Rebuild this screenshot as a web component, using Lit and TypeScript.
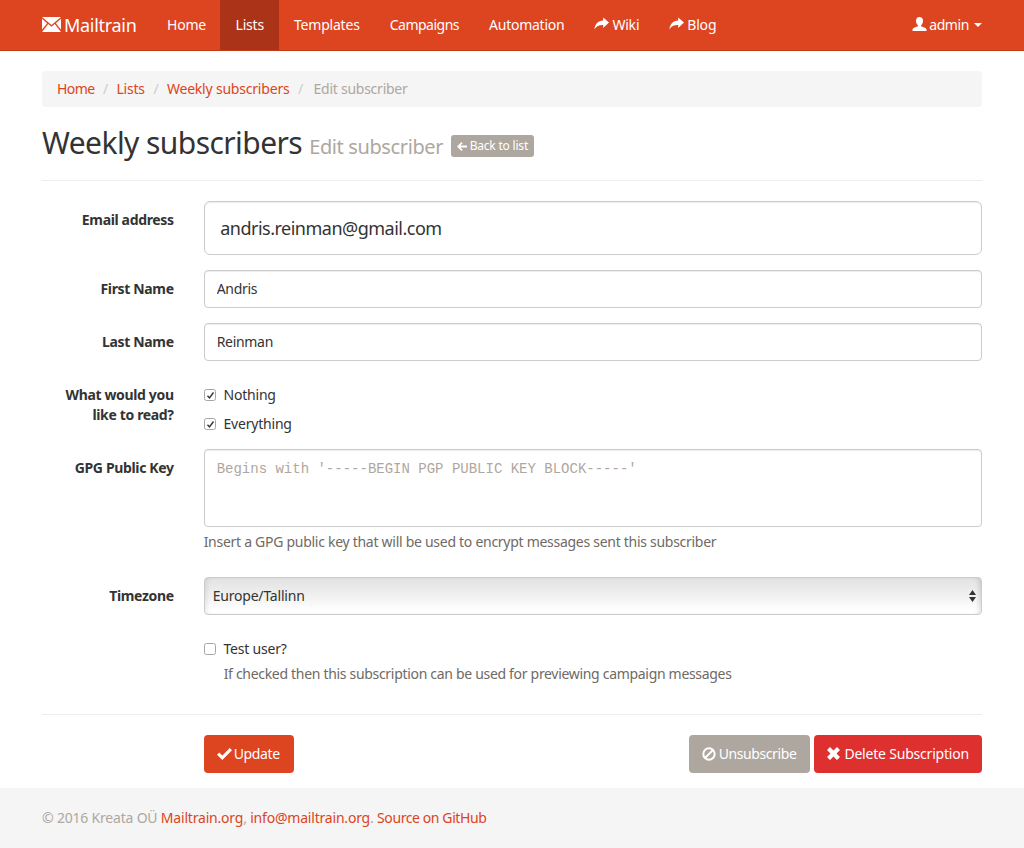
import { LitElement, html, css, svg } from "lit";
import { customElement } from "lit/decorators.js";

const shareIcon = svg`<path d="M15 5.6 9.200.4v3.100C4 3.700 1 7 .4 12.500c1.800-3.200 4.600-4.500 8.800-4.400v2.900z" fill="currentColor"/>`;
const tick = svg`<path d="M1.500 4.800 3.500 7 7.500 1.500" fill="none" stroke="currentColor" stroke-width="1.400"/>`;

@customElement("app-root")
export class AppRoot extends LitElement {
  static styles = css`
    :host { display: block; font-family: "Noto Sans", "Open Sans", sans-serif; font-size: 14px; line-height: 20px; color: #333; letter-spacing: -0.2px; }
    * { box-sizing: border-box; }
    a { color: #dd4420; text-decoration: none; }
    .navbar { height: 51px; background: #dd4420; border-bottom: 1px solid #c23a18; display: flex; padding: 0 42px; color: #fff; }
    .brand { display: flex; align-items: center; gap: 3px; font-size: 18px; color: #fff; padding-right: 15px; width: 110px; flex: none; letter-spacing: -0.3px; }
    .brand svg { width: 19px; height: 15px; margin-top: -1px; flex: none; }
    .nav { display: flex; flex: 1; }
    .nav a { display: flex; align-items: center; gap: 3px; color: #fff; padding: 0 15px; height: 50px; }
    .nav a.active { background: #ab3418; margin-left: -1px; padding: 0 15px 0 15.500px; }
    .nav a.tight { letter-spacing: -0.5px; }
    .nav a.semi { letter-spacing: -0.25px; }
    .nav .spacer { flex: 1; }
    .nav a.user { padding: 0; gap: 2px; letter-spacing: -0.4px; }
    .nav svg { flex: none; margin-bottom: 3px; }
    .caret { width: 0; height: 0; border-left: 4px solid transparent; border-right: 4px solid transparent; border-top: 4px solid #fff; margin-left: 3px; }
    main { padding: 20px 42px 0; }
    .crumbs { display: flex; align-items: center; height: 36px; background: #f5f5f5; border-radius: 4px; padding: 0 15px; color: #aea79f; }
    .crumbs a:first-child { letter-spacing: -0.6px; }
    .crumbs i { font-style: normal; color: #ccc; padding: 0 8.500px; }
    .crumbs span { margin-left: 2px; letter-spacing: -0.25px; }
    h2 { margin: 16px 0 0; height: 57px; font-weight: 400; font-size: 30px; line-height: 40px; color: #333; display: flex; align-items: baseline; letter-spacing: -0.57px; }
    h2 small { font-size: 20px; color: #aea79f; margin-left: 7px; letter-spacing: -0.38px; }
    .back { display: inline-flex; align-items: center; gap: 3px; height: 22px; margin-left: 7.500px; padding: 0 6px; background: #aea79f; color: #fff; border-radius: 3px; font-size: 12px; line-height: 18px; letter-spacing: -0.2px; align-self: center; margin-top: -11px; }
    hr { border: 0; border-top: 1px solid #eee; margin: 0; }
    .head-rule { margin-bottom: 20px; }
    .row { display: grid; grid-template-columns: 131.67px 1fr; column-gap: 30px; margin-bottom: 15px; }
    .label { text-align: right; font-weight: 700; padding-top: 9px; letter-spacing: -0.35px; }
    .field { min-width: 0; }
    input.text, textarea, select { display: block; width: 100%; font: inherit; letter-spacing: inherit; color: #333; background: #fff; border: 1px solid #ccc; border-radius: 4px; box-shadow: inset 0 1px 1px rgba(0,0,0,.075); outline: none; }
    input.text { height: 38px; padding: 7px 12px 9px; letter-spacing: -0.3px; }
    input.lg { height: 54px; padding: 14px 15.500px; font-size: 18px; border-radius: 6px; line-height: 24px; letter-spacing: -0.5px; }
    textarea { height: 78px; padding: 9px 12px; font-family: "Liberation Mono", monospace; font-size: 14px; line-height: 20px; resize: none; display: block; letter-spacing: 0; }
    textarea::placeholder { color: #aea79f; opacity: 1; }
    .help { margin-top: 5px; color: #6f6a64; letter-spacing: -0.28px; }
    .help.spaced { margin-bottom: 10px; }
    .checks { padding-top: 9px; }
    .check { display: flex; align-items: center; height: 20px; gap: 7.300px; }
    .check + .check { margin-top: 9px; }
    .box { width: 12px; height: 12px; margin-left: 0.500px; border: 1px solid #a6a6a6; border-radius: 2.500px; background: #fff; flex: none; display: flex; align-items: center; justify-content: center; color: #333; }
    .selwrap { position: relative; }
    select { appearance: none; height: 38px; padding: 0 8px; background: linear-gradient(#e2e2e2, #f2f2f2 55%, #fff 90%); box-shadow: inset 4px 0 4px -2px rgba(0,0,0,.08), inset -4px 0 4px -2px rgba(0,0,0,.12); }
    .arrows { position: absolute; right: 6px; top: 12px; width: 7px; height: 14px; pointer-events: none; }
    .test { margin-top: 24px; }
    .test .help { margin: 5px 0 0 20px; letter-spacing: -0.31px; }
    .rule2 { margin-top: 30px; }
    .actions { display: grid; grid-template-columns: 131.67px 1fr; column-gap: 30px; margin-top: 20px; }
    .btns { display: flex; justify-content: space-between; }
    .btns div { display: flex; gap: 4px; }
    .btn { display: inline-flex; align-items: center; gap: 2px; height: 38px; padding: 0 14px 0 13px; border-radius: 4px; color: #fff; background: #dd4420; letter-spacing: -0.35px; }
    .btn.grey { background: #aea79f; gap: 3px; letter-spacing: -0.4px; }
    .btn.red { background: #df3030; gap: 4px; padding: 0 13px; letter-spacing: -0.2px; }
    .btn svg { margin-bottom: 1px; }
    footer { margin-top: 15px; height: 60px; background: #f5f5f5; padding: 20px 42px 0; color: #aea79f; }
    footer a:last-child { letter-spacing: -0.4px; }
  `;

  render() {
    return html`
      <div class="navbar">
        <div class="brand">
          <svg viewBox="0 0 19 15"><path fill="#fff" d="M0 0h19L9.500 8zM0 1.800l5.200 4.400L0 12.500zM19 1.800v10.700l-5.200-6.300zM6.200 7l3.300 2.800L12.800 7 19 15H0z"/></svg>
          <span>Mailtrain</span>
        </div>
        <nav class="nav">
          <a href="#">Home</a>
          <a href="#" class="active">Lists</a>
          <a href="#">Templates</a>
          <a href="#" class="tight">Campaigns</a>
          <a href="#" class="semi">Automation</a>
          <a href="#"><svg width="15" height="13" viewBox="0 0 15 13">${shareIcon}</svg>Wiki</a>
          <a href="#"><svg width="15" height="13" viewBox="0 0 15 13">${shareIcon}</svg>Blog</a>
          <span class="spacer"></span>
          <a href="#" class="user">
            <svg width="15" height="14" viewBox="0 0 15 14"><path fill="currentColor" d="M7.500 0c2.200 0 3.500 1.700 3.500 3.900 0 1.700-.8 3.400-1.900 4.300v1c2.800.8 5.400 1.800 5.400 3.400v1.400H.5v-1.400c0-1.600 2.600-2.600 5.400-3.400v-1C4.800 7.300 4 5.600 4 3.900 4 1.700 5.300 0 7.500 0z"/></svg>
            admin<span class="caret"></span>
          </a>
        </nav>
      </div>
      <main>
        <div class="crumbs">
          <a href="#">Home</a><i>/</i><a href="#">Lists</a><i>/</i><a href="#">Weekly subscribers</a><i>/</i><span>Edit subscriber</span>
        </div>
        <h2>Weekly subscribers <small>Edit subscriber</small>
          <a class="back" href="#"><svg width="10" height="9" viewBox="0 0 10 9"><path fill="#fff" d="M4.500 0 5.700 1.200 3.400 3.400H10v2.200H3.400l2.300 2.200L4.500 9 0 4.500z"/></svg>Back to list</a>
        </h2>
        <hr class="head-rule" />
        <div class="row">
          <div class="label">Email address</div>
          <div class="field"><input class="text lg" .value=${"andris.reinman@gmail.com"} /></div>
        </div>
        <div class="row">
          <div class="label">First Name</div>
          <div class="field"><input class="text" .value=${"Andris"} /></div>
        </div>
        <div class="row">
          <div class="label">Last Name</div>
          <div class="field"><input class="text" .value=${"Reinman"} /></div>
        </div>
        <div class="row">
          <div class="label">What would you like to read?</div>
          <div class="field checks">
            <div class="check"><span class="box"><svg width="9" height="9" viewBox="0 0 9 9">${tick}</svg></span>Nothing</div>
            <div class="check"><span class="box"><svg width="9" height="9" viewBox="0 0 9 9">${tick}</svg></span>Everything</div>
          </div>
        </div>
        <div class="row">
          <div class="label">GPG Public Key</div>
          <div class="field">
            <textarea placeholder="Begins with '-----BEGIN PGP PUBLIC KEY BLOCK-----'"></textarea>
            <div class="help spaced">Insert a GPG public key that will be used to encrypt messages sent this subscriber</div>
          </div>
        </div>
        <div class="row">
          <div class="label">Timezone</div>
          <div class="field selwrap">
            <select><option>Europe/Tallinn</option></select>
            <svg class="arrows" viewBox="0 0 7 14"><path fill="#333" d="M3.500 1 7 6H0zM0 8h7l-3.500 5z"/></svg>
          </div>
        </div>
        <div class="row test">
          <div></div>
          <div class="field">
            <div class="check"><span class="box"></span>Test user?</div>
            <div class="help">If checked then this subscription can be used for previewing campaign messages</div>
          </div>
        </div>
        <hr class="rule2" />
        <div class="actions">
          <div></div>
          <div class="btns">
            <a class="btn" href="#"><svg width="15" height="12" viewBox="0 0 15 12"><path fill="#fff" d="M5.300 12 0 6.700l2.200-2.200 3.100 3.100L12.800 0 15 2.200z"/></svg>Update</a>
            <div>
              <a class="btn grey" href="#"><svg width="14" height="14" viewBox="0 0 14 14"><circle cx="7" cy="7" r="5.700" fill="none" stroke="#fff" stroke-width="2"/><path d="M3 11 11 3" stroke="#fff" stroke-width="2"/></svg>Unsubscribe</a>
              <a class="btn red" href="#"><svg width="13" height="13" viewBox="0 0 13 13"><path fill="#fff" d="M3 0l3.500 3.500L10 0l3 3-3.500 3.500L13 10l-3 3-3.500-3.500L3 13l-3-3 3.500-3.500L0 3z"/></svg>Delete Subscription</a>
            </div>
          </div>
        </div>
      </main>
      <footer>© 2016 Kreata OÜ <a href="#">Mailtrain.org</a>, <a href="#">info@mailtrain.org</a>. <a href="#">Source on GitHub</a></footer>
    `;
  }
}
